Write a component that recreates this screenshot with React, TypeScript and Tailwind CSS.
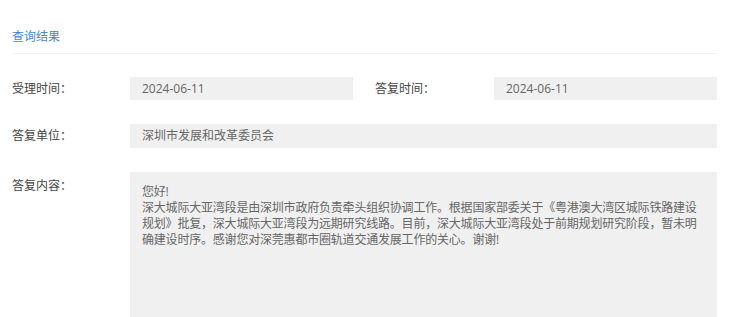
import React from "react";

export default function App() {
  const lines = [
    "您好!",
    "深大城际大亚湾段是由深圳市政府负责牵头组织协调工作。根据国家部委关于《粤港澳大湾区城际铁路建设",
    "规划》批复，深大城际大亚湾段为远期研究线路。目前，深大城际大亚湾段处于前期规划研究阶段，暂未明",
    "确建设时序。感谢您对深莞惠都市圈轨道交通发展工作的关心。谢谢!",
  ];
  return (
    <div className="w-[740px] h-[317px] overflow-hidden bg-white pl-[12px] font-['Open_Sans','Noto_Sans_CJK_SC',sans-serif] text-[12px]">
      <div className="w-[705px]">
        <div className="pt-[29px] pb-[8px] border-b border-[#f2f2f2] text-[#4a86c8] leading-[16px]">
          查询结果
        </div>

        <div className="mt-[23px] flex items-center h-[23px]">
          <div className="w-[118px] text-[#444]">受理时间：</div>
          <div className="w-[223px] h-[23px] bg-[#f0f0f0] px-[12px] flex items-center text-[#666]">2024-06-11</div>
          <div className="ml-[22px] w-[119px] text-[#444]">答复时间：</div>
          <div className="w-[223px] h-[23px] bg-[#f0f0f0] px-[12px] flex items-center text-[#666]">2024-06-11</div>
        </div>

        <div className="mt-[24px] flex items-center h-[24px]">
          <div className="w-[118px] text-[#444]">答复单位：</div>
          <div className="flex-1 h-[24px] bg-[#f0f0f0] px-[12px] flex items-center text-[#666]">深圳市发展和改革委员会</div>
        </div>

        <div className="mt-[24px] flex items-start">
          <div className="w-[118px] pt-[6px] text-[#444] leading-[16px]">答复内容：</div>
          <div className="flex-1 min-h-[160px] bg-[#f0f0f0] px-[12px] pt-[12px] text-[#666] leading-[16px] tracking-[-0.2px]">
            {lines.map((l, i) => (
              <div key={i} className="whitespace-nowrap">{l}</div>
            ))}
          </div>
        </div>
      </div>
    </div>
  );
}
